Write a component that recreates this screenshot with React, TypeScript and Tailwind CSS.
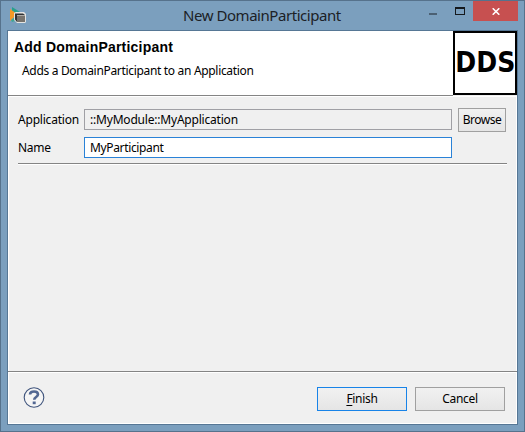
import React from "react";

function AppIcon() {
  return (
    <svg width="18" height="18" viewBox="0 0 18 18" className="block">
      <path d="M3 1L11 6V9L3 5Z" fill="#28a08c" />
      <path d="M1 3L8 8L1 15Z" fill="#f39a25" />
      <path d="M2 14L6 11V15L3 16Z" fill="#3fa796" />
      <path d="M5 7L7 6H15L17 8V16L16 17H8L5 14Z" fill="#e4e4e2" />
      <path d="M6 7.500H14L16 9H8V16L6 13.500Z" fill="#303234" />
      <path d="M8 9.500H16V16H8Z" fill="#77736d" />
    </svg>
  );
}

function TitleBar() {
  return (
    <div className="relative flex h-[29px] shrink-0 justify-center">
      <div className="absolute left-2 top-[5px]">
        <AppIcon />
      </div>
      <div className="w-[159px] whitespace-nowrap text-[15px] leading-[29px] tracking-[-0.45px] text-[#1c2126]">
        New DomainParticipant
      </div>
      <div className="absolute right-[6px] top-0 flex h-5">
        <div className="flex w-[26px] pt-3">
          <div className="h-[2px] w-2 bg-[#4b6073]" />
        </div>
        <div className="flex w-[18px] pt-[6px]">
          <div className="h-2 w-[10px] border border-t-2 border-[#15191d]" />
        </div>
        <div className="flex w-[45px] items-center justify-center bg-[#c75050]">
          <svg width="8" height="7" viewBox="0 0 8 7">
            <path d="M0.7 0.3L7.3 6.7M7.3 0.3L0.7 6.7" stroke="#fff" strokeWidth="1.6" />
          </svg>
        </div>
      </div>
    </div>
  );
}

function Header() {
  return (
    <div className="flex h-[64px] shrink-0 bg-white">
      <div className="grow pl-[6px] pt-[8px]">
        <div className="whitespace-nowrap font-['Liberation_Sans',Arial,sans-serif] text-[14px] font-bold leading-4 tracking-[0.2px]">
          Add DomainParticipant
        </div>
        <div className="mt-2 whitespace-nowrap pl-2 leading-4 tracking-[-0.32px]">
          Adds a DomainParticipant to an Application
        </div>
      </div>
      <div className="flex h-16 w-16 items-center justify-center border-2 border-black font-['DejaVu_Sans',sans-serif] text-[28px] font-bold leading-none">
        <span className="scale-x-90">DDS</span>
      </div>
    </div>
  );
}

export default function App() {
  return (
    <div className="flex h-[432px] w-[525px] flex-col overflow-hidden border border-[#56728c] bg-[#7b9fbe] font-['Noto_Sans','Open_Sans',sans-serif] text-[12px] text-black">
      <TitleBar />
      <div className="mx-[6px] flex h-[395px] shrink-0 flex-col border border-[#567795] bg-[#f0f0f0]">
        <Header />
        <div className="h-px w-[445px] shrink-0 bg-[#848484]" />
        <div className="h-px shrink-0 bg-white" />
        <div className="grow border-x border-x-white pl-[9px] pt-[11px]">
          <div className="flex h-6 items-center">
            <div className="w-[66px] leading-4 tracking-[-0.2px]">Application</div>
            <div className="mt-px flex h-[21px] w-[368px] items-center self-start border border-[#a0a0a5] pl-[5px] leading-4 tracking-[-0.2px]">
              ::MyModule::MyApplication
            </div>
            <button className="ml-[6px] h-6 w-12 border border-[#a0a0a0] bg-linear-to-b from-[#f1f1f1] to-[#e5e5e5] text-center leading-[22px] tracking-[-0.5px]">
              Browse
            </button>
          </div>
          <div className="mt-[5px] flex h-[21px] items-center">
            <div className="w-[66px] leading-4 tracking-[-0.3px]">Name</div>
            <div className="flex h-[21px] w-[368px] items-center border border-[#2a82d7] bg-white pl-[5px] leading-4 tracking-[-0.35px]">
              MyParticipant
            </div>
          </div>
          <div className="mt-[5px] h-[2px] w-[489px] border-b border-t border-b-white border-t-[#848484]" />
        </div>
        <div className="h-px shrink-0 bg-[#848484]" />
        <div className="flex h-[52px] shrink-0 border border-white pl-[14px] pt-[14px]">
          <div className="w-[294px]">
            <svg width="22" height="22" viewBox="0 0 22 22">
              <circle cx="11" cy="10.500" r="9.8" fill="#f5f5f5" stroke="#40557d" strokeWidth="1.1" />
              <path d="M7 7.500C7 5.200 8.800 4.500 11 4.500C13.600 4.500 15 5.500 15 7.500C15 10 11.200 10 11.200 12.700" fill="none" stroke="#526792" strokeWidth="2.6" />
              <path d="M9.700 14.500H12.700V17.200H9.700Z" fill="#526792" />
            </svg>
          </div>
          <button className="h-6 w-[90px] border border-[#1883e8] bg-linear-to-b from-[#f1f1f1] to-[#e5e5e5] text-center leading-[22px] tracking-[-0.3px]">
            <span className="underline underline-offset-2">F</span>inish
          </button>
          <button className="ml-2 h-6 w-[90px] border border-[#a0a0a0] bg-linear-to-b from-[#f1f1f1] to-[#e5e5e5] text-center leading-[22px] tracking-[-0.3px]">
            Cancel
          </button>
        </div>
      </div>
    </div>
  );
}
